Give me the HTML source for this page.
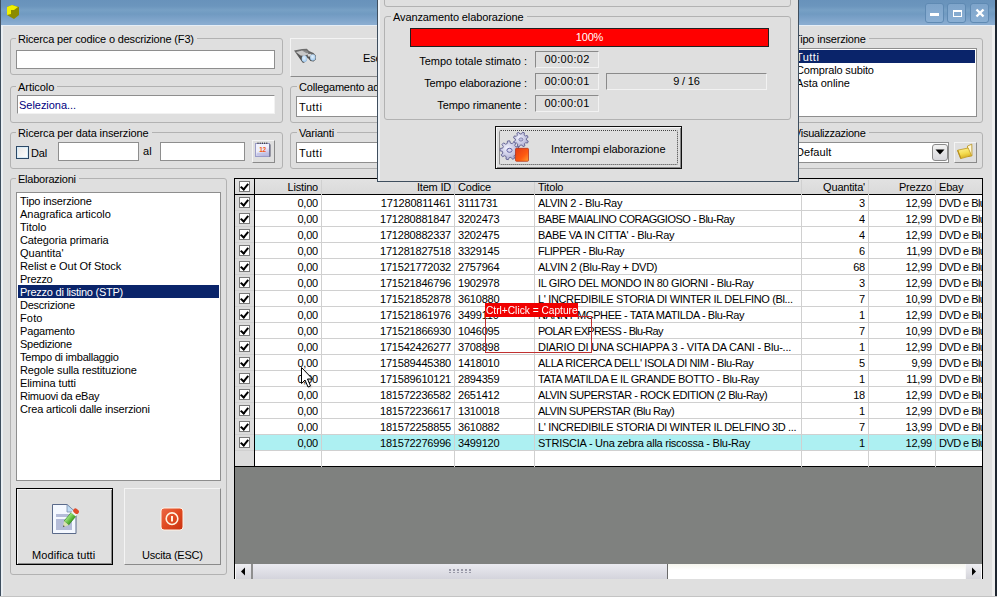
<!DOCTYPE html><html><head><meta charset="utf-8"><style>*{margin:0;padding:0;box-sizing:border-box}
html,body{width:997px;height:597px;overflow:hidden}
body{position:relative;background:#DFDFDF;font-family:"Liberation Sans",sans-serif;font-size:11px;color:#000;letter-spacing:-0.2px}
.a{position:absolute}
.title{left:0;top:0;width:997px;height:25px;background:linear-gradient(#6892BB 0px,#6B95BD 6px,#77A0C5 10px,#709AC1 14px,#7AA1C8 18px,#8AADD1 24px)}
.tline{left:0;top:25px;width:997px;height:1px;background:#E6EEF6}
.gb{position:absolute;border:1px solid #B2B2B2;border-radius:3px}
.lbl{position:absolute;background:#DFDFDF;padding:0 3px 0 2px;line-height:13px;white-space:nowrap}
.inp{position:absolute;background:#fff;border:1px solid #8E8E8E}
.txt{position:absolute;line-height:13px;white-space:nowrap}
.btn{position:absolute;background:#DFDFDF;border:1px solid;border-color:#F4F4F4 #8A8A8A #8A8A8A #F4F4F4}
.lb{position:absolute;background:#fff;border:1px solid #8E8E8E}
.li{position:absolute;left:1px;right:1px;height:13px;line-height:15px;padding-left:2px;white-space:nowrap}
.li.s{background:#0A246A;color:#fff}
#grid{position:absolute;left:234px;top:178px;width:749px;height:401px;background:#7F817F;border:1px solid #000;border-bottom:none;overflow:hidden}
.ghdr{position:absolute;left:0;top:0;width:747px;height:16px;background:linear-gradient(#E2E2E2,#DADADA);border-bottom:1px solid #000}
.ht{position:absolute;top:1px;height:15px;line-height:15px;white-space:nowrap;overflow:hidden}
.grow{position:absolute;left:0;width:747px;height:16px;background:#fff;border-bottom:1px solid #D0D0D0}
.grow.sel{background:#ADF0F2}
.chkcell{position:absolute;left:0;top:0;width:19px;height:16px;background:#DCDCDC;border-bottom:1px solid #D0D0D0}
.ct{position:absolute;top:0;height:15px;line-height:16px;white-space:nowrap;overflow:hidden}
.ct.t{letter-spacing:-0.45px}
.chk{position:absolute;width:11px;height:11px;background:#fff;border:1px solid #7A7A7A}
.chk:after{content:"";position:absolute;left:2px;top:0px;width:3px;height:6px;border:solid #000;border-width:0 2px 2px 0;transform:rotate(40deg)}
.vl{position:absolute;width:1px;background:#D0D0D0}
.vdark{position:absolute;width:1px;background:#000}
</style></head><body>
<div class="a title"></div>
<div class="a tline"></div>
<!-- left/right window borders -->
<div class="a" style="left:0;top:0;width:1px;height:597px;background:#3E4E5E"></div>
<div class="a" style="left:1px;top:26px;width:2px;height:570px;background:#EAEFF3"></div>
<div class="a" style="left:992px;top:26px;width:3px;height:570px;background:#EEEEEE"></div>
<div class="a" style="left:995px;top:0;width:2px;height:597px;background:#1E2630"></div>
<div class="a" style="left:0;top:596px;width:997px;height:1px;background:#C4C4C4"></div>

<!-- app icon -->
<svg class="a" style="left:6px;top:4px" width="16" height="16" viewBox="0 0 16 16">
<polygon points="1,3 6,1 13,3 13,11 8,15 1,11" fill="#8B8B00"/>
<polygon points="1,3 6,1 12,3 8,6 5,6 5,10 1,11" fill="#F0F000"/>
</svg>

<!-- title buttons -->
<div class="a tbtn" style="left:925px;top:3px;width:19px;height:20px;border:1px solid #5F8AB3;border-radius:3px;background:linear-gradient(#7EA4CA,#8AAFD3)"></div>
<div class="a" style="left:930px;top:13px;width:9px;height:3px;background:#fff"></div>
<div class="a tbtn" style="left:947px;top:3px;width:19px;height:20px;border:1px solid #5F8AB3;border-radius:3px;background:linear-gradient(#7EA4CA,#8AAFD3)"></div>
<div class="a" style="left:953px;top:10px;width:9px;height:7px;border:1px solid #fff;border-top-width:2px"></div>
<div class="a tbtn" style="left:970px;top:3px;width:19px;height:20px;border:1px solid #5F8AB3;border-radius:3px;background:linear-gradient(#7EA4CA,#8AAFD3)"></div>
<svg class="a" style="left:975px;top:8px" width="10" height="10" viewBox="0 0 10 10"><path d="M1.5 1.5L8.5 8.5M8.5 1.5L1.5 8.5" stroke="#fff" stroke-width="2.4"/></svg>

<!-- Group 1 -->
<div class="gb" style="left:10px;top:38px;width:273px;height:37px"></div>
<div class="lbl" style="left:16px;top:33px;letter-spacing:-0.172px">Ricerca per codice o descrizione (F3)</div>
<div class="inp" style="left:16px;top:50px;width:259px;height:19px"></div>

<!-- Articolo -->
<div class="gb" style="left:10px;top:86px;width:273px;height:37px"></div>
<div class="lbl" style="left:16px;top:81px;letter-spacing:-0.060px">Articolo</div>
<div class="inp" style="left:17px;top:95px;width:258px;height:19px;border-right-color:#F2F2F2;border-bottom-color:#F2F2F2"></div>
<div class="txt" style="left:19px;top:99px;color:#000080;letter-spacing:-0.032px">Seleziona...</div>

<!-- Ricerca per data -->
<div class="gb" style="left:10px;top:132px;width:273px;height:37px"></div>
<div class="lbl" style="left:16px;top:127px;letter-spacing:-0.126px">Ricerca per data inserzione</div>
<div class="a" style="left:16px;top:146px;width:13px;height:13px;border:1px solid #2C4866;background:linear-gradient(135deg,#E6E6E6,#FFFFFF);box-shadow:inset 0 0 0 1px #D8ECF8"></div>
<div class="txt" style="left:31px;top:147px;letter-spacing:-0.202px">Dal</div>
<div class="inp" style="left:58px;top:142px;width:81px;height:19px"></div>
<div class="txt" style="left:143px;top:145px;letter-spacing:0.169px">al</div>
<div class="inp" style="left:160px;top:142px;width:85px;height:19px"></div>
<div class="btn" style="left:252px;top:140px;width:23px;height:23px"></div>

<!-- Elaborazioni -->
<div class="gb" style="left:10px;top:178px;width:217px;height:397px"></div>
<div class="lbl" style="left:16px;top:173px;letter-spacing:-0.228px">Elaborazioni</div>
<div class="lb" style="left:16px;top:192px;width:205px;height:289px">
<div class="li" style="top:1px;letter-spacing:-0.166px">Tipo inserzione</div>
<div class="li" style="top:14px;letter-spacing:-0.016px">Anagrafica articolo</div>
<div class="li" style="top:27px;letter-spacing:-0.015px">Titolo</div>
<div class="li" style="top:40px;letter-spacing:-0.105px">Categoria primaria</div>
<div class="li" style="top:53px;letter-spacing:-0.020px">Quantita'</div>
<div class="li" style="top:66px;letter-spacing:-0.071px">Relist e Out Of Stock</div>
<div class="li" style="top:79px;letter-spacing:-0.306px">Prezzo</div>
<div class="li s" style="top:92px;letter-spacing:-0.253px">Prezzo di listino (STP)</div>
<div class="li" style="top:105px;letter-spacing:-0.242px">Descrizione</div>
<div class="li" style="top:118px;letter-spacing:0.147px">Foto</div>
<div class="li" style="top:131px;letter-spacing:-0.162px">Pagamento</div>
<div class="li" style="top:144px;letter-spacing:-0.263px">Spedizione</div>
<div class="li" style="top:157px;letter-spacing:-0.232px">Tempo di imballaggio</div>
<div class="li" style="top:170px;letter-spacing:-0.126px">Regole sulla restituzione</div>
<div class="li" style="top:183px;letter-spacing:-0.081px">Elimina tutti</div>
<div class="li" style="top:196px;letter-spacing:-0.257px">Rimuovi da eBay</div>
<div class="li" style="top:209px;letter-spacing:-0.157px">Crea articoli dalle inserzioni</div>
</div>
<div class="btn" style="left:16px;top:488px;width:97px;height:77px;border:1px solid #000;box-shadow:inset 1px 1px 0 #F4F4F4, inset -1px -1px 0 #8A8A8A"></div>
<div class="txt" style="left:32px;top:549px;letter-spacing:0.111px">Modifica tutti</div>
<div class="btn" style="left:124px;top:488px;width:97px;height:77px"></div>
<div class="txt" style="left:142px;top:549px;letter-spacing:-0.247px">Uscita (ESC)</div>

<!-- Esegui button -->
<div class="btn" style="left:290px;top:38px;width:100px;height:39px"></div>
<div class="txt" style="left:363px;top:52px">Esegui</div>

<!-- Collegamento -->
<div class="gb" style="left:290px;top:86px;width:100px;height:37px"></div>
<div class="lbl" style="left:297px;top:81px">Collegamento ad eBay</div>
<div class="inp" style="left:296px;top:96px;width:90px;height:21px"></div>
<div class="txt" style="left:299px;top:101px;letter-spacing:0.463px">Tutti</div>

<!-- Varianti -->
<div class="gb" style="left:290px;top:132px;width:100px;height:37px"></div>
<div class="lbl" style="left:297px;top:127px">Varianti</div>
<div class="inp" style="left:296px;top:142px;width:90px;height:21px"></div>
<div class="txt" style="left:299px;top:147px;letter-spacing:0.463px">Tutti</div>

<!-- Tipo inserzione -->
<div class="gb" style="left:786px;top:38px;width:197px;height:85px"></div>
<div class="lbl" style="left:792px;top:33px;letter-spacing:-0.166px">Tipo inserzione</div>
<div class="lb" style="left:792px;top:48px;width:185px;height:69px">
<div class="li s" style="top:1px;left:0;padding-left:3px;letter-spacing:0.463px">Tutti</div>
<div class="li" style="top:14px;left:0;padding-left:3px;letter-spacing:-0.153px">Compralo subito</div>
<div class="li" style="top:27px;left:0;padding-left:3px;letter-spacing:-0.057px">Asta online</div>
</div>

<!-- Visualizzazione -->
<div class="gb" style="left:786px;top:132px;width:197px;height:37px"></div>
<div class="lbl" style="left:792px;top:127px;letter-spacing:-0.275px">Visualizzazione</div>
<div class="inp" style="left:792px;top:142px;width:157px;height:21px"></div>
<div class="txt" style="left:796px;top:146px;letter-spacing:0.064px">Default</div>
<div class="a" style="left:932px;top:144px;width:16px;height:17px;border:1px solid #8A8A8A;border-radius:3px;background:linear-gradient(#F2F2F2,#D8D8DC)"></div>
<svg class="a" style="left:935px;top:149px" width="10" height="6" viewBox="0 0 10 6"><path d="M0.5 0.5H9.5L5 5.5Z" fill="#000"/></svg>
<div class="btn" style="left:954px;top:142px;width:23px;height:21px"></div>

<div id="grid">
<div class="ghdr"></div>
<div class="ht" style="left:20px;width:63px;text-align:right">Listino</div>
<div class="ht" style="left:87px;width:129px;text-align:right">Item ID</div>
<div class="ht" style="left:223px;width:76px">Codice</div>
<div class="ht" style="left:303px;width:263px">Titolo</div>
<div class="ht" style="left:567px;width:63px;text-align:right">Quantita'</div>
<div class="ht" style="left:634px;width:63px;text-align:right">Prezzo</div>
<div class="ht" style="left:704px;width:43px">Ebay</div>
<div class="chk" style="left:4px;top:2px"></div>
<div class="grow" style="top:16px">
<div class="chkcell"></div><div class="chk" style="left:4px;top:2px"></div>
<div class="ct" style="left:20px;width:63px;text-align:right">0,00</div>
<div class="ct" style="left:87px;width:129px;text-align:right">171280811461</div>
<div class="ct" style="left:223px;width:76px">3111731</div>
<div class="ct" style="left:303px;width:263px;letter-spacing:-0.291px">ALVIN 2 - Blu-Ray</div>
<div class="ct" style="left:567px;width:63px;text-align:right">3</div>
<div class="ct" style="left:634px;width:63px;text-align:right">12,99</div>
<div class="ct" style="left:704px;width:200px;letter-spacing:-0.55px">DVD e Blu-Ray</div>
</div>
<div class="grow" style="top:32px">
<div class="chkcell"></div><div class="chk" style="left:4px;top:2px"></div>
<div class="ct" style="left:20px;width:63px;text-align:right">0,00</div>
<div class="ct" style="left:87px;width:129px;text-align:right">171280881847</div>
<div class="ct" style="left:223px;width:76px">3202473</div>
<div class="ct" style="left:303px;width:263px;letter-spacing:-0.504px">BABE MAIALINO CORAGGIOSO - Blu-Ray</div>
<div class="ct" style="left:567px;width:63px;text-align:right">4</div>
<div class="ct" style="left:634px;width:63px;text-align:right">12,99</div>
<div class="ct" style="left:704px;width:200px;letter-spacing:-0.55px">DVD e Blu-Ray</div>
</div>
<div class="grow" style="top:48px">
<div class="chkcell"></div><div class="chk" style="left:4px;top:2px"></div>
<div class="ct" style="left:20px;width:63px;text-align:right">0,00</div>
<div class="ct" style="left:87px;width:129px;text-align:right">171280882337</div>
<div class="ct" style="left:223px;width:76px">3202475</div>
<div class="ct" style="left:303px;width:263px;letter-spacing:-0.319px">BABE VA IN CITTA' - Blu-Ray</div>
<div class="ct" style="left:567px;width:63px;text-align:right">4</div>
<div class="ct" style="left:634px;width:63px;text-align:right">12,99</div>
<div class="ct" style="left:704px;width:200px;letter-spacing:-0.55px">DVD e Blu-Ray</div>
</div>
<div class="grow" style="top:64px">
<div class="chkcell"></div><div class="chk" style="left:4px;top:2px"></div>
<div class="ct" style="left:20px;width:63px;text-align:right">0,00</div>
<div class="ct" style="left:87px;width:129px;text-align:right">171281827518</div>
<div class="ct" style="left:223px;width:76px">3329145</div>
<div class="ct" style="left:303px;width:263px;letter-spacing:-0.509px">FLIPPER - Blu-Ray</div>
<div class="ct" style="left:567px;width:63px;text-align:right">6</div>
<div class="ct" style="left:634px;width:63px;text-align:right">11,99</div>
<div class="ct" style="left:704px;width:200px;letter-spacing:-0.55px">DVD e Blu-Ray</div>
</div>
<div class="grow" style="top:80px">
<div class="chkcell"></div><div class="chk" style="left:4px;top:2px"></div>
<div class="ct" style="left:20px;width:63px;text-align:right">0,00</div>
<div class="ct" style="left:87px;width:129px;text-align:right">171521772032</div>
<div class="ct" style="left:223px;width:76px">2757964</div>
<div class="ct" style="left:303px;width:263px;letter-spacing:-0.270px">ALVIN 2 (Blu-Ray + DVD)</div>
<div class="ct" style="left:567px;width:63px;text-align:right">68</div>
<div class="ct" style="left:634px;width:63px;text-align:right">12,99</div>
<div class="ct" style="left:704px;width:200px;letter-spacing:-0.55px">DVD e Blu-Ray</div>
</div>
<div class="grow" style="top:96px">
<div class="chkcell"></div><div class="chk" style="left:4px;top:2px"></div>
<div class="ct" style="left:20px;width:63px;text-align:right">0,00</div>
<div class="ct" style="left:87px;width:129px;text-align:right">171521846796</div>
<div class="ct" style="left:223px;width:76px">1902978</div>
<div class="ct" style="left:303px;width:263px;letter-spacing:-0.358px">IL GIRO DEL MONDO IN 80 GIORNI - Blu-Ray</div>
<div class="ct" style="left:567px;width:63px;text-align:right">3</div>
<div class="ct" style="left:634px;width:63px;text-align:right">12,99</div>
<div class="ct" style="left:704px;width:200px;letter-spacing:-0.55px">DVD e Blu-Ray</div>
</div>
<div class="grow" style="top:112px">
<div class="chkcell"></div><div class="chk" style="left:4px;top:2px"></div>
<div class="ct" style="left:20px;width:63px;text-align:right">0,00</div>
<div class="ct" style="left:87px;width:129px;text-align:right">171521852878</div>
<div class="ct" style="left:223px;width:76px">3610880</div>
<div class="ct" style="left:303px;width:263px;letter-spacing:-0.360px">L' INCREDIBILE STORIA DI WINTER IL DELFINO (Bl...</div>
<div class="ct" style="left:567px;width:63px;text-align:right">7</div>
<div class="ct" style="left:634px;width:63px;text-align:right">10,99</div>
<div class="ct" style="left:704px;width:200px;letter-spacing:-0.55px">DVD e Blu-Ray</div>
</div>
<div class="grow" style="top:128px">
<div class="chkcell"></div><div class="chk" style="left:4px;top:2px"></div>
<div class="ct" style="left:20px;width:63px;text-align:right">0,00</div>
<div class="ct" style="left:87px;width:129px;text-align:right">171521861976</div>
<div class="ct" style="left:223px;width:76px">3499110</div>
<div class="ct" style="left:303px;width:263px;letter-spacing:-0.412px">NANNY MCPHEE - TATA MATILDA - Blu-Ray</div>
<div class="ct" style="left:567px;width:63px;text-align:right">1</div>
<div class="ct" style="left:634px;width:63px;text-align:right">12,99</div>
<div class="ct" style="left:704px;width:200px;letter-spacing:-0.55px">DVD e Blu-Ray</div>
</div>
<div class="grow" style="top:144px">
<div class="chkcell"></div><div class="chk" style="left:4px;top:2px"></div>
<div class="ct" style="left:20px;width:63px;text-align:right">0,00</div>
<div class="ct" style="left:87px;width:129px;text-align:right">171521866930</div>
<div class="ct" style="left:223px;width:76px">1046095</div>
<div class="ct" style="left:303px;width:263px;letter-spacing:-0.714px">POLAR EXPRESS - Blu-Ray</div>
<div class="ct" style="left:567px;width:63px;text-align:right">7</div>
<div class="ct" style="left:634px;width:63px;text-align:right">10,99</div>
<div class="ct" style="left:704px;width:200px;letter-spacing:-0.55px">DVD e Blu-Ray</div>
</div>
<div class="grow" style="top:160px">
<div class="chkcell"></div><div class="chk" style="left:4px;top:2px"></div>
<div class="ct" style="left:20px;width:63px;text-align:right">0,00</div>
<div class="ct" style="left:87px;width:129px;text-align:right">171542426277</div>
<div class="ct" style="left:223px;width:76px">3708898</div>
<div class="ct" style="left:303px;width:263px;letter-spacing:-0.188px">DIARIO DI UNA SCHIAPPA 3 - VITA DA CANI - Blu-...</div>
<div class="ct" style="left:567px;width:63px;text-align:right">1</div>
<div class="ct" style="left:634px;width:63px;text-align:right">12,99</div>
<div class="ct" style="left:704px;width:200px;letter-spacing:-0.55px">DVD e Blu-Ray</div>
</div>
<div class="grow" style="top:176px">
<div class="chkcell"></div><div class="chk" style="left:4px;top:2px"></div>
<div class="ct" style="left:20px;width:63px;text-align:right">0,00</div>
<div class="ct" style="left:87px;width:129px;text-align:right">171589445380</div>
<div class="ct" style="left:223px;width:76px">1418010</div>
<div class="ct" style="left:303px;width:263px;letter-spacing:-0.406px">ALLA RICERCA DELL' ISOLA DI NIM - Blu-Ray</div>
<div class="ct" style="left:567px;width:63px;text-align:right">5</div>
<div class="ct" style="left:634px;width:63px;text-align:right">9,99</div>
<div class="ct" style="left:704px;width:200px;letter-spacing:-0.55px">DVD e Blu-Ray</div>
</div>
<div class="grow" style="top:192px">
<div class="chkcell"></div><div class="chk" style="left:4px;top:2px"></div>
<div class="ct" style="left:20px;width:63px;text-align:right">0,00</div>
<div class="ct" style="left:87px;width:129px;text-align:right">171589610121</div>
<div class="ct" style="left:223px;width:76px">2894359</div>
<div class="ct" style="left:303px;width:263px;letter-spacing:-0.386px">TATA MATILDA E IL GRANDE BOTTO - Blu-Ray</div>
<div class="ct" style="left:567px;width:63px;text-align:right">1</div>
<div class="ct" style="left:634px;width:63px;text-align:right">11,99</div>
<div class="ct" style="left:704px;width:200px;letter-spacing:-0.55px">DVD e Blu-Ray</div>
</div>
<div class="grow" style="top:208px">
<div class="chkcell"></div><div class="chk" style="left:4px;top:2px"></div>
<div class="ct" style="left:20px;width:63px;text-align:right">0,00</div>
<div class="ct" style="left:87px;width:129px;text-align:right">181572236582</div>
<div class="ct" style="left:223px;width:76px">2651412</div>
<div class="ct" style="left:303px;width:263px;letter-spacing:-0.454px">ALVIN SUPERSTAR - ROCK EDITION (2 Blu-Ray)</div>
<div class="ct" style="left:567px;width:63px;text-align:right">18</div>
<div class="ct" style="left:634px;width:63px;text-align:right">12,99</div>
<div class="ct" style="left:704px;width:200px;letter-spacing:-0.55px">DVD e Blu-Ray</div>
</div>
<div class="grow" style="top:224px">
<div class="chkcell"></div><div class="chk" style="left:4px;top:2px"></div>
<div class="ct" style="left:20px;width:63px;text-align:right">0,00</div>
<div class="ct" style="left:87px;width:129px;text-align:right">181572236617</div>
<div class="ct" style="left:223px;width:76px">1310018</div>
<div class="ct" style="left:303px;width:263px;letter-spacing:-0.530px">ALVIN SUPERSTAR (Blu Ray)</div>
<div class="ct" style="left:567px;width:63px;text-align:right">1</div>
<div class="ct" style="left:634px;width:63px;text-align:right">12,99</div>
<div class="ct" style="left:704px;width:200px;letter-spacing:-0.55px">DVD e Blu-Ray</div>
</div>
<div class="grow" style="top:240px">
<div class="chkcell"></div><div class="chk" style="left:4px;top:2px"></div>
<div class="ct" style="left:20px;width:63px;text-align:right">0,00</div>
<div class="ct" style="left:87px;width:129px;text-align:right">181572258855</div>
<div class="ct" style="left:223px;width:76px">3610882</div>
<div class="ct" style="left:303px;width:263px;letter-spacing:-0.362px">L' INCREDIBILE STORIA DI WINTER IL DELFINO 3D ...</div>
<div class="ct" style="left:567px;width:63px;text-align:right">7</div>
<div class="ct" style="left:634px;width:63px;text-align:right">13,99</div>
<div class="ct" style="left:704px;width:200px;letter-spacing:-0.55px">DVD e Blu-Ray</div>
</div>
<div class="grow sel" style="top:256px">
<div class="chkcell"></div><div class="chk" style="left:4px;top:2px"></div>
<div class="ct" style="left:20px;width:63px;text-align:right">0,00</div>
<div class="ct" style="left:87px;width:129px;text-align:right">181572276996</div>
<div class="ct" style="left:223px;width:76px">3499120</div>
<div class="ct" style="left:303px;width:263px;letter-spacing:-0.255px">STRISCIA - Una zebra alla riscossa - Blu-Ray</div>
<div class="ct" style="left:567px;width:63px;text-align:right">1</div>
<div class="ct" style="left:634px;width:63px;text-align:right">12,99</div>
<div class="ct" style="left:704px;width:200px;letter-spacing:-0.55px">DVD e Blu-Ray</div>
</div>
<div class="grow empty" style="top:272px;border-bottom-color:#000"><div class="chkcell" style="border-bottom-color:#000"></div></div>
<div class="vl" style="left:86px;top:1px;height:287px"></div>
<div class="vl" style="left:219px;top:1px;height:287px"></div>
<div class="vl" style="left:299px;top:1px;height:287px"></div>
<div class="vl" style="left:566px;top:1px;height:287px"></div>
<div class="vl" style="left:633px;top:1px;height:287px"></div>
<div class="vl" style="left:700px;top:1px;height:287px"></div>
<div class="vdark" style="left:19px;top:0px;height:288px"></div>
</div>
<!-- scrollbar -->
<div class="a" style="left:235px;top:564px;width:747px;height:15px;background:linear-gradient(#F6F6EE,#FFFFFF 40%)"></div>
<div class="a" style="left:235px;top:564px;width:16px;height:15px;background:linear-gradient(#EEEEF2,#D4D4DA);border-left:1px solid #F8F8F8"></div>
<svg class="a" style="left:240px;top:567px" width="6" height="9" viewBox="0 0 6 9"><path d="M5 0.5V8.5L1 4.5Z" fill="#000"/></svg>
<div class="a" style="left:251px;top:564px;width:2px;height:15px;background:#8E8E8E"></div>
<div class="a" style="left:253px;top:564px;width:415px;height:15px;background:linear-gradient(#EAEAF0,#D4D4DC);border-right:1px solid #6A6A6A"></div>
<div class="a" style="left:449px;top:569px;width:23px;height:4px;background-image:radial-gradient(circle at 1px 1px,#9A9AA8 0.8px,transparent 1px);background-size:4px 3px"></div>
<div class="a" style="left:965px;top:564px;width:16px;height:15px;background:linear-gradient(#EEEEF2,#D4D4DA);border-left:1px solid #F8F8F8"></div>
<svg class="a" style="left:971px;top:567px" width="6" height="9" viewBox="0 0 6 9"><path d="M1 0.5V8.5L5 4.5Z" fill="#000"/></svg>

<!-- popup dialog -->
<div class="a" style="left:377px;top:0;width:422px;height:182px;background:#DFDFDF;border:1px solid #3E4E5E;border-top:none"></div>
<div class="a" style="left:378px;top:0;width:2px;height:181px;background:#EEF2F6"></div>
<div class="gb" style="left:384px;top:-10px;width:407px;height:17px"></div>
<div class="gb" style="left:384px;top:16px;width:407px;height:104px"></div>
<div class="lbl" style="left:391px;top:11px;letter-spacing:-0.105px">Avanzamento elaborazione</div>
<div class="a" style="left:410px;top:28px;width:359px;height:19px;background:#FF0000;border:1px solid #202020"></div>
<div class="txt" style="left:410px;top:31px;width:359px;text-align:center;color:#fff">100%</div>
<div class="txt" style="left:380px;top:55px;width:147px;text-align:right;letter-spacing:0.009px">Tempo totale stimato :</div>
<div class="txt" style="left:380px;top:77px;width:147px;text-align:right;letter-spacing:-0.119px">Tempo elaborazione :</div>
<div class="txt" style="left:380px;top:99px;width:147px;text-align:right;letter-spacing:-0.082px">Tempo rimanente :</div>
<div class="a" style="left:535px;top:51px;width:64px;height:17px;border:1px solid;border-color:#8A8A8A #F2F2F2 #F2F2F2 #8A8A8A"></div>
<div class="txt" style="left:535px;top:53px;width:64px;text-align:center;letter-spacing:0.298px">00:00:02</div>
<div class="a" style="left:535px;top:73px;width:64px;height:17px;border:1px solid;border-color:#8A8A8A #F2F2F2 #F2F2F2 #8A8A8A"></div>
<div class="txt" style="left:535px;top:75px;width:64px;text-align:center;letter-spacing:0.298px">00:00:01</div>
<div class="a" style="left:535px;top:95px;width:64px;height:17px;border:1px solid;border-color:#8A8A8A #F2F2F2 #F2F2F2 #8A8A8A"></div>
<div class="txt" style="left:535px;top:97px;width:64px;text-align:center;letter-spacing:0.298px">00:00:01</div>
<div class="a" style="left:606px;top:73px;width:161px;height:17px;border:1px solid;border-color:#8A8A8A #F2F2F2 #F2F2F2 #8A8A8A"></div>
<div class="txt" style="left:606px;top:75px;width:161px;text-align:center">9 / 16</div>
<div class="a" style="left:495px;top:126px;width:187px;height:43px;border:1px solid #101010;background:#DFDFDF;box-shadow:inset 1px 1px 0 #F6F6F6, inset -1px -1px 0 #8A8A8A"></div>
<div class="a" style="left:499px;top:130px;width:179px;height:35px;border:1px dotted #404040;border-radius:2px"></div>
<div class="txt" style="left:551px;top:143px;letter-spacing:-0.046px">Interrompi elaborazione</div>

<!-- capture overlay -->
<div class="a" style="left:485px;top:316px;width:107px;height:37px;border:1px solid #C03030"></div>
<div class="a" style="left:485px;top:303px;width:93px;height:14px;background:#F00000"></div>
<div class="a" style="left:486px;top:303px;color:#fff;font-size:11.5px;line-height:15px;letter-spacing:0;white-space:nowrap;transform:scaleX(0.885);transform-origin:0 0">Ctrl+Click = Capture</div>

<!-- binoculars -->
<svg class="a" style="left:290px;top:44px" width="30" height="22" viewBox="0 0 30 22">
<defs><linearGradient id="bg1" x1="0" y1="0" x2="0" y2="1"><stop offset="0" stop-color="#707070"/><stop offset="1" stop-color="#404040"/></linearGradient>
<radialGradient id="lens" cx="0.45" cy="0.4" r="0.65"><stop offset="0" stop-color="#E6F2FC"/><stop offset="1" stop-color="#98C4EC"/></radialGradient></defs>
<path d="M4,6.6 L12,5 L16.8,4.8 L19,7 L23.5,9 L25.8,11.5 L25.8,15.5 L23.5,17.6 L20.5,17 L17.5,13.5 L16.5,16.5 L14,18.8 L12.5,18.5 Z" fill="url(#bg1)"/>
<path d="M6,8 L12,6.6 L16.5,7.6 L18.5,10 L14.5,12 L10.5,11.5 Z" fill="#C8C8C8"/>
<path d="M12,6.6 L16.5,6.4 L19,8.5 L16.5,9.2Z" fill="#8A8A8A"/>
<path d="M17.5,10 L21.5,9.8 L20.5,12.5 L18,12.5Z" fill="#D4D4D4"/>
<ellipse cx="14.4" cy="14.8" rx="2.7" ry="3.3" fill="url(#lens)"/>
<ellipse cx="22.8" cy="13.5" rx="2.7" ry="3.3" fill="url(#lens)"/>
</svg>

<!-- calendar -->
<svg class="a" style="left:252px;top:140px" width="24" height="23" viewBox="0 0 24 23">
<defs><linearGradient id="cal" x1="0" y1="0" x2="0.4" y2="1"><stop offset="0" stop-color="#F4F4FF"/><stop offset="0.55" stop-color="#F0F0FA"/><stop offset="1" stop-color="#B8B8E0"/></linearGradient></defs>
<rect x="3.5" y="3.5" width="14" height="13" fill="url(#cal)" stroke="#9A9CC8" stroke-width="1"/>
<path d="M17.5 4 L18.5 4.5 L18.5 16.5 L17.5 17Z" fill="#505068"/>
<path d="M5.5 3.2 h10" stroke="#3A3A3A" stroke-width="1.6" stroke-dasharray="1 1.2"/>
<text x="10.6" y="11.6" font-family="Liberation Sans" font-weight="bold" font-size="6.5" fill="#F05A18" text-anchor="middle" letter-spacing="-0.2">12</text>
<path d="M5 14h11" stroke="#C0C0E4" stroke-width="1.5"/>
</svg>

<!-- folder -->
<svg class="a" style="left:954px;top:142px" width="23" height="21" viewBox="0 0 23 21">
<defs><linearGradient id="fold" x1="0" y1="0" x2="0.3" y2="1"><stop offset="0" stop-color="#FFF49A"/><stop offset="0.6" stop-color="#F4DC50"/><stop offset="1" stop-color="#D8B020"/></linearGradient></defs>
<path d="M13.5 4 L17.8 2.2 L18 13.8 L14 14.5Z" fill="#FFF8D8" stroke="#B89018" stroke-width="0.8"/>
<path d="M3.6 8.2 L14.2 6 L17.6 13.6 L6.8 16.6 Z" fill="url(#fold)" stroke="#C09820" stroke-width="0.8"/>
<path d="M3.6 8.2 L6.8 16.6" stroke="#B89020" stroke-width="1.2"/>
</svg>

<!-- gears -->
<svg class="a" style="left:498px;top:128px" width="36" height="38" viewBox="0 0 36 38">
<defs><radialGradient id="gr" cx="0.4" cy="0.4" r="0.7"><stop offset="0" stop-color="#F4F4FF"/><stop offset="1" stop-color="#A4A4CC"/></radialGradient>
<linearGradient id="rs" x1="0" y1="0" x2="1" y2="1"><stop offset="0" stop-color="#E03A18"/><stop offset="0.6" stop-color="#FF5A10"/><stop offset="1" stop-color="#FFA030"/></linearGradient></defs>
<path fill="url(#gr)" stroke="#6A6A98" stroke-width="1" d="M28.47,12.06 L30.22,13.12 L29.51,15.05 L27.49,14.71 L26.44,15.84 L26.93,17.82 L25.06,18.68 L23.87,17.01 L22.34,17.07 L21.28,18.82 L19.35,18.11 L19.69,16.09 L18.56,15.04 L16.58,15.53 L15.72,13.66 L17.39,12.47 L17.33,10.94 L15.58,9.88 L16.29,7.95 L18.31,8.29 L19.36,7.16 L18.87,5.18 L20.74,4.32 L21.93,5.99 L23.46,5.93 L24.52,4.18 L26.45,4.89 L26.11,6.91 L27.24,7.96 L29.22,7.47 L30.08,9.34 L28.41,10.53Z"/>
<ellipse cx="22.9" cy="11.5" rx="2" ry="1.6" fill="#C0C0E0" stroke="#7070A0" stroke-width="0.8"/>
<path fill="url(#gr)" stroke="#6A6A98" stroke-width="1" d="M18.56,23.73 L20.56,25.15 L19.60,27.26 L17.22,26.68 L15.99,27.93 L16.61,30.31 L14.52,31.31 L13.06,29.33 L11.32,29.50 L10.27,31.72 L8.02,31.14 L8.18,28.69 L6.73,27.70 L4.50,28.72 L3.15,26.84 L4.85,25.06 L4.38,23.37 L2.01,22.72 L2.19,20.41 L4.63,20.14 L5.36,18.54 L3.96,16.52 L5.58,14.87 L7.63,16.23 L9.21,15.47 L9.44,13.03 L11.74,12.80 L12.43,15.16 L14.13,15.60 L15.88,13.87 L17.79,15.18 L16.80,17.43 L17.83,18.86 L20.27,18.66 L20.89,20.89 L18.69,21.98Z"/>
<ellipse cx="11.5" cy="22.3" rx="2.6" ry="2" fill="#D8D8F0" stroke="#6060A0" stroke-width="1"/>
<rect x="17.5" y="20.3" width="13" height="13" rx="1" fill="url(#rs)" stroke="#B02810" stroke-width="0.7"/>
</svg>

<!-- doc + pencil -->
<svg class="a" style="left:48px;top:500px" width="36" height="38" viewBox="0 0 36 38">
<defs><linearGradient id="pen" x1="0" y1="0" x2="1" y2="0"><stop offset="0" stop-color="#A0E880"/><stop offset="1" stop-color="#40A020"/></linearGradient></defs>
<path d="M4.5 4.5 H19 L28 13 V33.5 H4.5Z" fill="#F4F8FF" stroke="#5A6A8A" stroke-width="1"/>
<path d="M19 4.5 V12 H27.5Z" fill="#C0DCF4" stroke="#7A8AAA" stroke-width="0.8"/>
<rect x="8" y="14" width="16" height="3" fill="#B4BCD8"/>
<rect x="8" y="19" width="16" height="11" fill="#B4BCD8"/>
<g transform="translate(29.5 9.5) rotate(39.5)">
<rect x="-3" y="6" width="6" height="11.5" fill="url(#pen)" stroke="#308020" stroke-width="0.6"/>
<rect x="-3" y="4" width="6" height="2.5" fill="#F4F4F4"/>
<rect x="-3" y="0" width="6" height="4.5" rx="2.2" fill="#E04A2A"/>
<path d="M-3 17.5 L0 23 L3 17.5Z" fill="#D8E0B0"/>
<path d="M-0.9 21 L0 23 L0.9 21Z" fill="#404040"/>
</g>
</svg>

<!-- power -->
<svg class="a" style="left:160px;top:507px" width="25" height="25" viewBox="0 0 25 25">
<defs><linearGradient id="pw" x1="0" y1="0" x2="1" y2="1"><stop offset="0" stop-color="#EC6A48"/><stop offset="0.5" stop-color="#E04A20"/><stop offset="1" stop-color="#C83010"/></linearGradient></defs>
<rect x="1" y="1" width="22" height="22" rx="3" fill="url(#pw)" stroke="#FFF4E8" stroke-width="1"/>
<circle cx="12" cy="11.7" r="5.8" fill="none" stroke="#FFF4E0" stroke-width="1.6"/>
<rect x="11" y="9" width="2" height="5.5" fill="#FFF4E0"/>
</svg>

<!-- mouse cursor -->
<svg class="a" style="left:300px;top:366px" width="16" height="24" viewBox="0 0 16 24">
<defs><filter id="sh" x="-50%" y="-50%" width="200%" height="200%"><feGaussianBlur stdDeviation="1.2"/></filter></defs>
<polygon points="2.5,2.5 2.5,18.5 6,15 9,22 11.5,21 8.5,14 13.5,14" fill="#000" opacity="0.25" filter="url(#sh)"/>
<polygon points="1.5,1.5 1.5,17.5 5,14 8,21 10.5,20 7.5,13 12.5,13" fill="#fff" stroke="#000" stroke-width="1" stroke-linejoin="miter"/>
</svg>

</body></html>
